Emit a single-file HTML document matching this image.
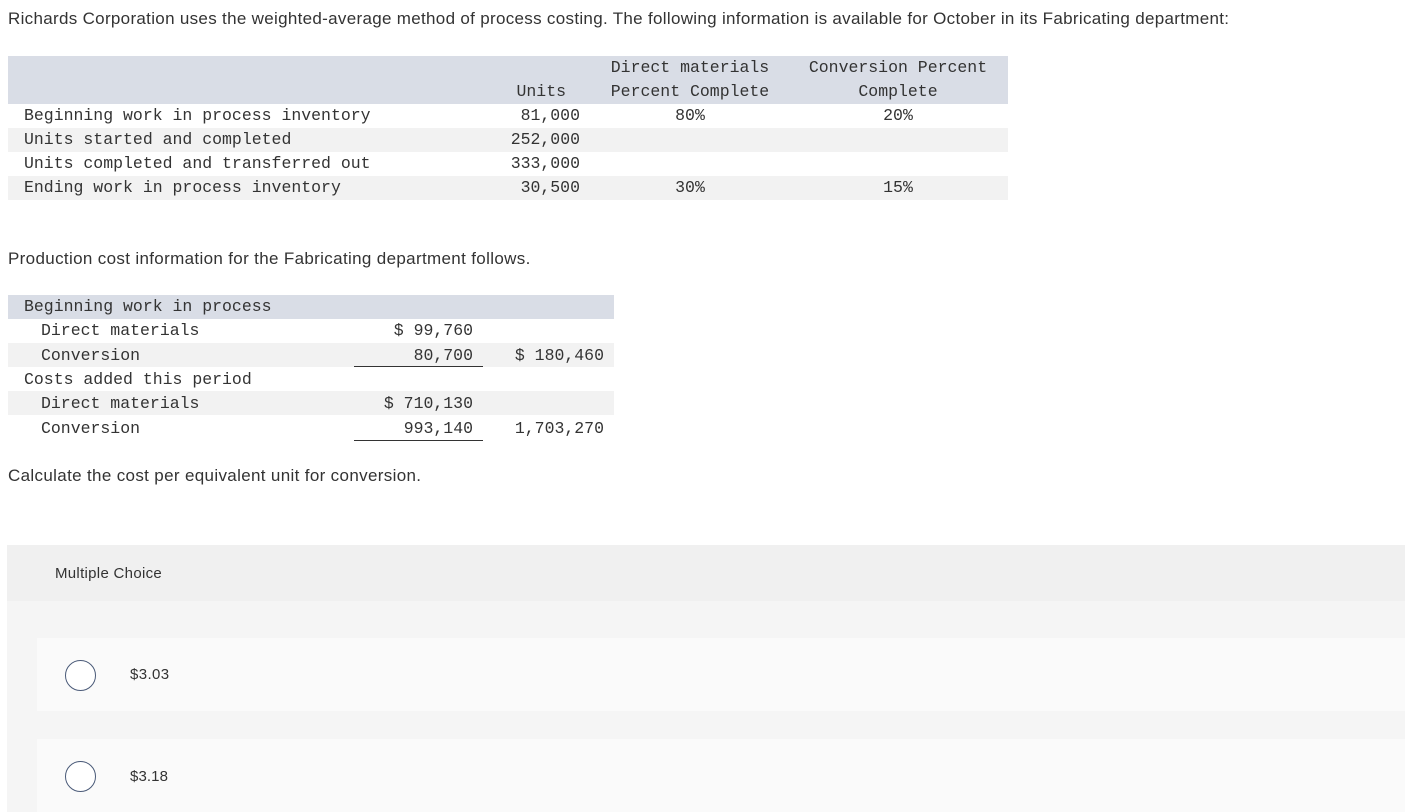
<!DOCTYPE html>
<html><head><meta charset="utf-8"><style>
body{margin:0;width:1405px;height:812px;background:#fff;position:relative;overflow:hidden;font-family:"Liberation Sans",sans-serif;color:#333}
.s{position:absolute;font-size:17px;letter-spacing:0.34px;white-space:nowrap;color:#333}
.m{position:absolute;font-family:"Liberation Mono",monospace;font-size:16.5px;white-space:nowrap;color:#333;line-height:24px}
.bg{position:absolute}
.r{text-align:right}
.c{text-align:center}
</style></head><body>
<div class="s" style="left:8px;top:9px;letter-spacing:0.31px">Richards Corporation uses the weighted-average method of process costing. The following information is available for October in its Fabricating department:</div>

<div class="bg" style="left:8px;top:56px;width:1000px;height:48px;background:#d9dde6"></div>
<div class="bg" style="left:8px;top:128px;width:1000px;height:24px;background:#f2f2f2"></div>
<div class="bg" style="left:8px;top:176px;width:1000px;height:24px;background:#f2f2f2"></div>

<div class="m c" style="left:590px;top:56px;width:200px">Direct materials</div>
<div class="m c" style="left:590px;top:80px;width:200px">Percent Complete</div>
<div class="m c" style="left:798px;top:56px;width:200px">Conversion Percent</div>
<div class="m c" style="left:798px;top:80px;width:200px">Complete</div>
<div class="m r" style="left:480px;top:80px;width:86px">Units</div>

<div class="m" style="left:24px;top:104px">Beginning work in process inventory</div>
<div class="m" style="left:24px;top:128px">Units started and completed</div>
<div class="m" style="left:24px;top:152px">Units completed and transferred out</div>
<div class="m" style="left:24px;top:176px">Ending work in process inventory</div>
<div class="m r" style="left:480px;top:104px;width:100px">81,000</div>
<div class="m r" style="left:480px;top:128px;width:100px">252,000</div>
<div class="m r" style="left:480px;top:152px;width:100px">333,000</div>
<div class="m r" style="left:480px;top:176px;width:100px">30,500</div>
<div class="m c" style="left:590px;top:104px;width:200px">80%</div>
<div class="m c" style="left:798px;top:104px;width:200px">20%</div>
<div class="m c" style="left:590px;top:176px;width:200px">30%</div>
<div class="m c" style="left:798px;top:176px;width:200px">15%</div>

<div class="s" style="left:8px;top:249px">Production cost information for the Fabricating department follows.</div>

<div class="bg" style="left:8px;top:295px;width:606px;height:24px;background:#d9dde6"></div>
<div class="bg" style="left:8px;top:343px;width:606px;height:24px;background:#f2f2f2"></div>
<div class="bg" style="left:8px;top:391px;width:606px;height:24px;background:#f2f2f2"></div>
<div class="bg" style="left:354px;top:366px;width:129px;height:1px;background:#333"></div>
<div class="bg" style="left:354px;top:440px;width:129px;height:1px;background:#333"></div>

<div class="m" style="left:24px;top:295px">Beginning work in process</div>
<div class="m" style="left:41px;top:319px">Direct materials</div>
<div class="m" style="left:41px;top:344px">Conversion</div>
<div class="m" style="left:24px;top:368px">Costs added this period</div>
<div class="m" style="left:41px;top:392px">Direct materials</div>
<div class="m" style="left:41px;top:417px">Conversion</div>
<div class="m r" style="left:360px;top:319px;width:113px">$ 99,760</div>
<div class="m r" style="left:360px;top:344px;width:113px">80,700</div>
<div class="m r" style="left:360px;top:392px;width:113px">$ 710,130</div>
<div class="m r" style="left:360px;top:417px;width:113px">993,140</div>
<div class="m r" style="left:490px;top:344px;width:114px">$ 180,460</div>
<div class="m r" style="left:490px;top:417px;width:114px">1,703,270</div>

<div class="s" style="left:8px;top:466px">Calculate the cost per equivalent unit for conversion.</div>

<div class="bg" style="left:7px;top:545px;width:1398px;height:267px;background:#f5f5f5"></div>
<div class="bg" style="left:7px;top:545px;width:1398px;height:56px;background:#f0f0f0"></div>
<div class="s" style="left:55px;top:565px;font-size:15px;letter-spacing:0.3px">Multiple Choice</div>
<div class="bg" style="left:37px;top:638px;width:1368px;height:73px;background:#fafafa"></div>
<div class="bg" style="left:37px;top:739px;width:1368px;height:73px;background:#fafafa"></div>
<div class="bg" style="left:65px;top:660px;width:29px;height:29px;border:1.3px solid #4a5a78;border-radius:50%;background:#fff"></div>
<div class="bg" style="left:65px;top:761px;width:29px;height:29px;border:1.3px solid #4a5a78;border-radius:50%;background:#fff"></div>
<div class="s" style="left:130px;top:666px;font-size:15px;letter-spacing:0.4px">$3.03</div>
<div class="s" style="left:130px;top:768px;font-size:15px;letter-spacing:0.1px">$3.18</div>
</body></html>
